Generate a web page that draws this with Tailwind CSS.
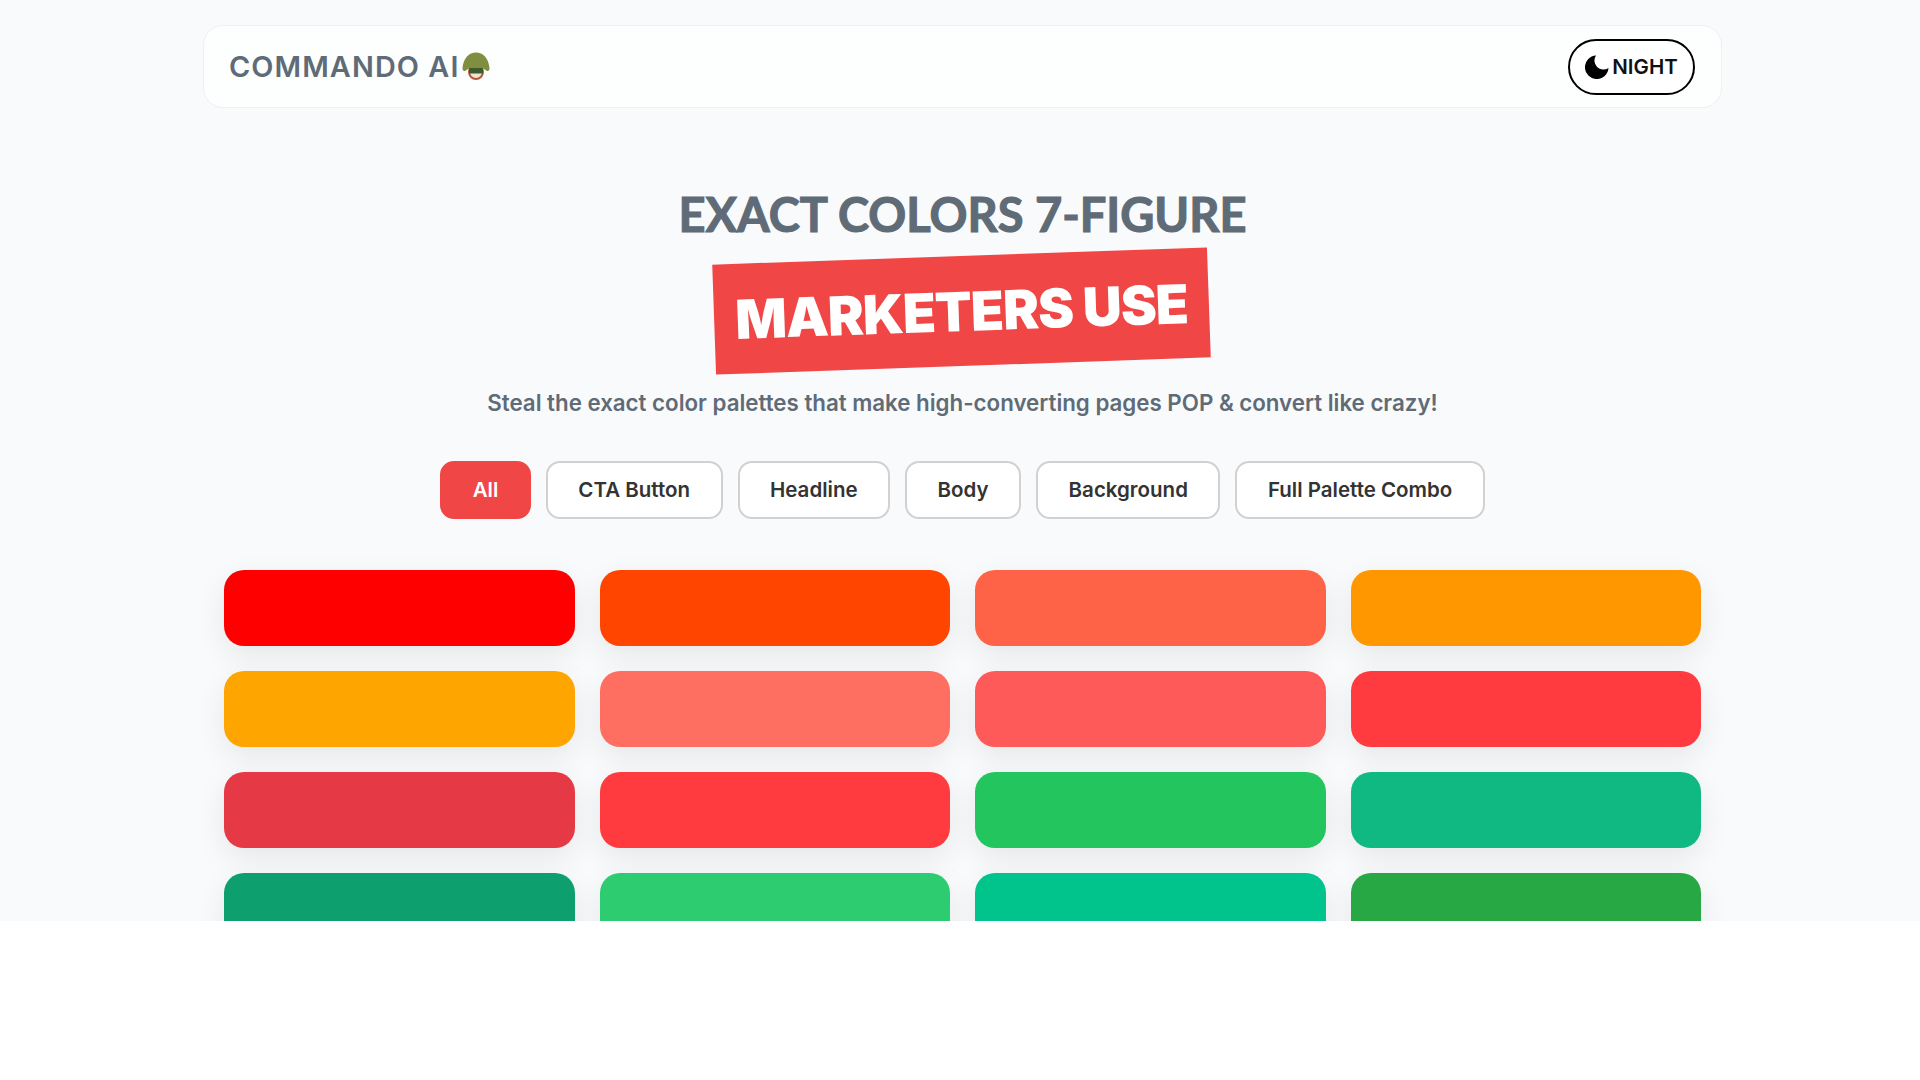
<!DOCTYPE html>
<html lang="en">
<head>
<meta charset="utf-8">
<title>Commando AI</title>
<script src="https://cdn.jsdelivr.net/npm/@tailwindcss/browser@4"></script>
</head>
<body class="bg-white overflow-hidden font-['Inter',sans-serif]">
<div class="h-[921px] overflow-hidden bg-[#f9fafc] pl-[203px] pt-[25px]">
  <div class="w-[1519px]">
    <header class="h-[83px] flex items-center justify-between bg-white/70 border border-[#eff0f3] rounded-[20px] pl-[25px] pr-[26px]">
      <div class="flex items-center text-[28.8px] font-semibold tracking-[1.1px] text-[#5f6b76]">COMMANDO AI<svg class="w-[28px] h-[28px] shrink-0 ml-[2px] -mt-[2px]" viewBox="0 0 28 28"><circle cx="14" cy="20" r="7" fill="#efe3d3" stroke="#b5573a" stroke-width="2"/><path d="M7 15h14v6.500H7z" fill="#3f5a2c"/><path d="M.500 16C1.500 6 7 .500 14 .500S26.500 6 27.500 16c.2 2-1 3.500-2.500 3L20.500 16h-13L3 19c-1.500.500-2.700-1-2.500-3z" fill="#7f8f3f"/></svg></div>
      <button class="w-[127px] h-[56px] pt-[1px] flex items-center justify-center gap-[3px] border-2 border-black rounded-full bg-white text-[20.5px] font-semibold text-[#111]">
        <svg class="w-[24px] h-[24px]" viewBox="0 0 24 24" fill="#000"><path d="M11 .500A11.800 11.800 0 1 0 23.500 13 9 9 0 0 1 11 .500z"/></svg>NIGHT
      </button>
    </header>

    <section class="flex flex-col items-center mt-[77px]">
      <h1 class="font-['Lato',sans-serif] text-[47px] leading-[58px] font-bold tracking-[0px] [-webkit-text-stroke:1.1px_#5f6b76] text-[#5f6b76]">EXACT COLORS 7-FIGURE</h1>
      <div class="mt-[13px] w-[495px] h-[110px] flex items-center justify-center bg-[#f04646] -translate-x-[1px] -rotate-2 text-white text-[54px] font-black tracking-[-1px]">MARKETERS USE</div>
      <p class="mt-[20px] text-[22.3px] leading-[34px] font-semibold text-[#5f6b76]">Steal the exact color palettes that make high-converting pages POP &amp; convert like crazy!</p>
    </section>

    <nav class="flex justify-center gap-[15px] mt-[41px]">
      <button class="h-[58px] px-[30.5px] rounded-[14px] bg-[#f04646] border-2 border-[#f04646] text-white text-[20.5px] font-semibold">All</button>
      <button class="h-[58px] px-[30.5px] rounded-[14px] bg-white border-2 border-[#d1d1d1] text-[#333] text-[20.5px] font-semibold">CTA Button</button>
      <button class="h-[58px] px-[30.5px] rounded-[14px] bg-white border-2 border-[#d1d1d1] text-[#333] text-[20.5px] font-semibold">Headline</button>
      <button class="h-[58px] px-[30.5px] rounded-[14px] bg-white border-2 border-[#d1d1d1] text-[#333] text-[20.5px] font-semibold">Body</button>
      <button class="h-[58px] px-[30.5px] rounded-[14px] bg-white border-2 border-[#d1d1d1] text-[#333] text-[20.5px] font-semibold">Background</button>
      <button class="h-[58px] px-[30.5px] rounded-[14px] bg-white border-2 border-[#d1d1d1] text-[#333] text-[20.5px] font-semibold">Full Palette Combo</button>
    </nav>

    <main class="grid grid-cols-4 gap-[25px] px-[21px] mt-[51px]">
      <div class="h-[76px] rounded-[20px] bg-[#ff0000] shadow-[0_10px_30px_rgba(0,0,0,0.08)]"></div>
      <div class="h-[76px] rounded-[20px] bg-[#ff4500] shadow-[0_10px_30px_rgba(0,0,0,0.08)]"></div>
      <div class="h-[76px] rounded-[20px] bg-[#ff6347] shadow-[0_10px_30px_rgba(0,0,0,0.08)]"></div>
      <div class="h-[76px] rounded-[20px] bg-[#ff9800] shadow-[0_10px_30px_rgba(0,0,0,0.08)]"></div>
      <div class="h-[76px] rounded-[20px] bg-[#ffa500] shadow-[0_10px_30px_rgba(0,0,0,0.08)]"></div>
      <div class="h-[76px] rounded-[20px] bg-[#ff6f61] shadow-[0_10px_30px_rgba(0,0,0,0.08)]"></div>
      <div class="h-[76px] rounded-[20px] bg-[#ff5a5a] shadow-[0_10px_30px_rgba(0,0,0,0.08)]"></div>
      <div class="h-[76px] rounded-[20px] bg-[#ff3b3f] shadow-[0_10px_30px_rgba(0,0,0,0.08)]"></div>
      <div class="h-[76px] rounded-[20px] bg-[#e63946] shadow-[0_10px_30px_rgba(0,0,0,0.08)]"></div>
      <div class="h-[76px] rounded-[20px] bg-[#ff3b3f] shadow-[0_10px_30px_rgba(0,0,0,0.08)]"></div>
      <div class="h-[76px] rounded-[20px] bg-[#22c55e] shadow-[0_10px_30px_rgba(0,0,0,0.08)]"></div>
      <div class="h-[76px] rounded-[20px] bg-[#10b981] shadow-[0_10px_30px_rgba(0,0,0,0.08)]"></div>
      <div class="h-[76px] rounded-[20px] bg-[#0e9f6e] shadow-[0_10px_30px_rgba(0,0,0,0.08)]"></div>
      <div class="h-[76px] rounded-[20px] bg-[#2ecc71] shadow-[0_10px_30px_rgba(0,0,0,0.08)]"></div>
      <div class="h-[76px] rounded-[20px] bg-[#00c48c] shadow-[0_10px_30px_rgba(0,0,0,0.08)]"></div>
      <div class="h-[76px] rounded-[20px] bg-[#28a745] shadow-[0_10px_30px_rgba(0,0,0,0.08)]"></div>
    </main>
  </div>
</div>
</body>
</html>
